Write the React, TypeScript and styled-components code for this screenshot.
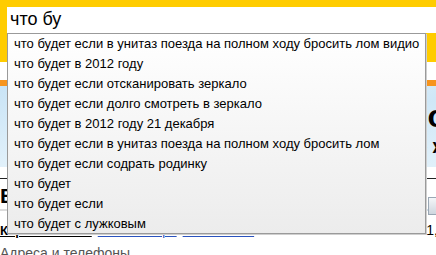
import styled, { createGlobalStyle } from 'styled-components';

const suggestions = [
    'что будет если в унитаз поезда на полном ходу бросить лом видио',
    'что будет в 2012 году',
    'что будет если отсканировать зеркало',
    'что будет если долго смотреть в зеркало',
    'что будет в 2012 году 21 декабря',
    'что будет если в унитаз поезда на полном ходу бросить лом',
    'что будет если содрать родинку',
    'что будет',
    'что будет если',
    'что будет с лужковым',
];

function App(){
    return(
        <Screen>
            <GlobalStyle />
            <Header>
                <SearchBox readOnly value="что бу" />
            </Header>
            <WhiteBand />
            <OrangeStrip />
            <Banner>
                <BannerLine size={32}>Погода хорошо</BannerLine>
                <BannerLine size={20}>Пробки свободно ж</BannerLine>
            </Banner>
            <Rule />
            <HeadlineRow>
                <Headline>Европа</Headline>
                <HeadlineTools>
                    <span>.</span>
                    <ToolButton />
                </HeadlineTools>
            </HeadlineRow>
            <Separator />
            <LinksRow>
                <Links>
                    <MainLink href="#">Карта Москвы</MainLink>
                    <BlueLink href="#">Схема метро</BlueLink>
                    <BlueLink href="#">Расписания</BlueLink>
                </Links>
                <Meta>
                    <MetaGray>не тыс</MetaGray>
                    <span>1,</span>
                </Meta>
            </LinksRow>
            <Address>Адреса и телефоны</Address>

            <Dropdown>
                {suggestions.map((s, i) => (
                    <Item key={i}>{s}</Item>
                ))}
            </Dropdown>
        </Screen>
    )
}

const GlobalStyle = createGlobalStyle`
    body{
        margin: 0;
        font-family: "Liberation Sans", Arial, sans-serif;
        background: #fff;
    }
`;

const Screen = styled.div`
    position: relative;
    width: 436px;
    height: 255px;
    overflow: hidden;
    background: #fff;
`;

const Header = styled.div`
    height: 62px;
    box-sizing: border-box;
    padding: 7px 0 0 7px;
    background-color: #ffcc00;
`;

const SearchBox = styled.input`
    display: block;
    width: 100%;
    height: 26px;
    box-sizing: border-box;
    border: none;
    outline: none;
    margin: 0;
    padding: 0 0 1px 3px;
    background: #fff;
    color: #000;
    font-family: "Liberation Sans", Arial, sans-serif;
    font-size: 18px;
`;

const WhiteBand = styled.div`
    height: 18px;
`;

const OrangeStrip = styled.div`
    height: 6px;
    background-color: #f7941d;
`;

const Banner = styled.div`
    height: 92px;
    box-sizing: border-box;
    padding-top: 14px;
    background: linear-gradient(160deg, #c9e4f6 0%, #e6f3fb 40%, #cfe7f7 70%, #e2f1fa 100%);
    background-size: 100% 81px;
    background-repeat: no-repeat;
    display: flex;
    flex-direction: column;
    align-items: flex-end;
    gap: 4px;
    margin-right: -11px;
`;

const BannerLine = styled.div<{ size: number }>`
    font-size: ${p => p.size}px;
    font-weight: bold;
    line-height: 1;
    color: #000;
    white-space: nowrap;
`;

const Rule = styled.div`
    height: 1px;
    background-color: #222;
`;

const HeadlineRow = styled.div`
    height: 30px;
    box-sizing: border-box;
    padding-top: 5px;
    display: flex;
    align-items: flex-start;
    justify-content: space-between;
`;

const Headline = styled.div`
    font-size: 21px;
    font-weight: bold;
    color: #000;
`;

const HeadlineTools = styled.div`
    display: flex;
    align-items: flex-end;
    gap: 2px;
    margin-top: 13px;
    margin-right: -4px;
    font-size: 13px;
`;

const ToolButton = styled.div`
    width: 10px;
    height: 16px;
    border: 1px solid #9aa7b4;
    background: linear-gradient(#f4f6f8, #cfd6de);
`;

const Separator = styled.div`
    height: 2px;
    background: linear-gradient(90deg, #dcdcdc 0%, #dcdcdc 96%, #c6dff2 100%);
`;

const LinksRow = styled.div`
    margin-top: 11px;
    display: flex;
    align-items: flex-end;
    justify-content: space-between;
    font-size: 13px;
`;

const Links = styled.div`
    display: flex;
    gap: 6px;
`;

const MainLink = styled.a`
    color: #000;
    font-weight: bold;
    text-decoration: underline;
`;

const BlueLink = styled.a`
    color: #2a52be;
    text-decoration: underline;
`;

const Meta = styled.div`
    display: flex;
    gap: 14px;
    margin-right: -2px;
    font-size: 14px;
`;

const MetaGray = styled.span`
    color: #888;
`;

const Address = styled.div`
    margin-top: 7px;
    font-size: 14px;
    color: #555;
`;

const Dropdown = styled.ul`
    position: absolute;
    left: 7px;
    top: 33px;
    width: 419px;
    height: 201px;
    box-sizing: border-box;
    margin: 0;
    padding: 0;
    list-style: none;
    border: 1px solid #9a9a9a;
    background: linear-gradient(#ffffff, #ececec);
    box-shadow: 1px 1px 0 #cfcfcf;
`;

const Item = styled.li`
    height: 20px;
    line-height: 20px;
    padding-left: 6px;
    font-size: 13px;
    color: #000;
    white-space: nowrap;
    overflow: hidden;
`;

export default App;
